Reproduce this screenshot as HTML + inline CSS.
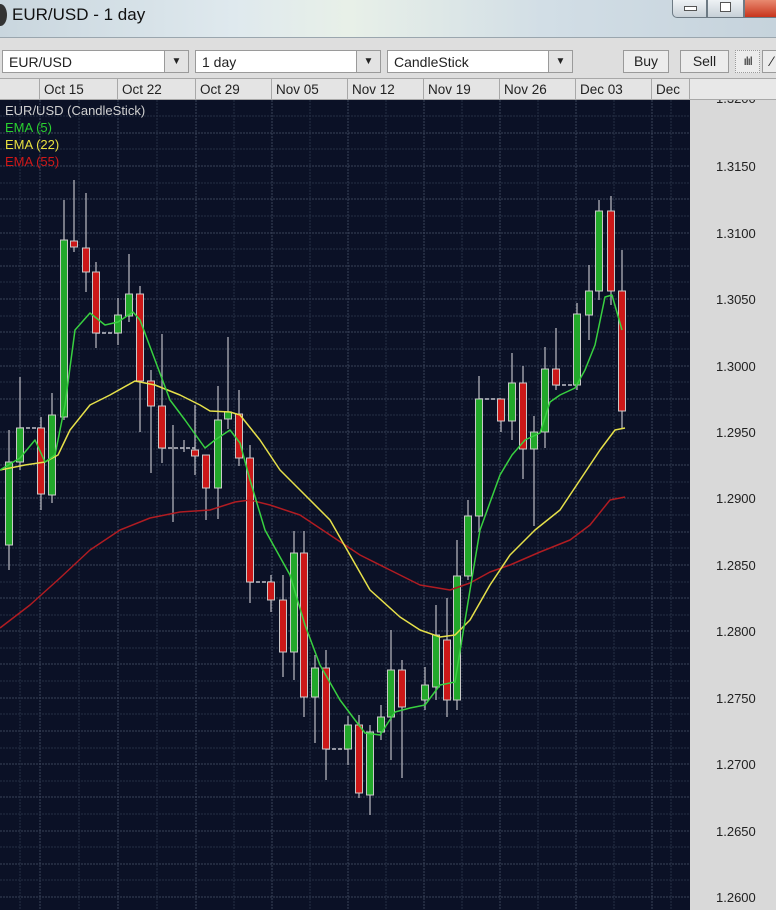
<!DOCTYPE html>
<html><head><meta charset="utf-8"><style>
*{margin:0;padding:0;box-sizing:border-box}
body{width:776px;height:910px;overflow:hidden;background:#d9d9d9;font-family:"Liberation Sans",sans-serif;position:relative}
.title{position:absolute;left:0;top:0;width:776px;height:38px;background:linear-gradient(90deg,#c9d6de 0%,#dfe9ee 30%,#e8f0e8 45%,#d2dee6 70%,#c6d3dc 100%);border-bottom:1px solid #9aa6ae}
.title span{position:absolute;left:12px;top:5px;font-size:17px;color:#111}
.ico{position:absolute;left:-6px;top:4px;width:13px;height:22px;border-radius:50%;background:#333}
.wb{position:absolute;top:0;height:18px;border:1px solid #6d7a84;border-top:none;background:linear-gradient(#eef2f5,#c7d0d7)}
.tb{position:absolute;left:0;top:38px;width:776px;height:40px;background:#dedede}
.combo{position:absolute;top:12px;height:23px;background:#fff;border:1px solid #9a9a9a;font-size:14px;padding:3px 0 0 6px;color:#222}
.combo b{position:absolute;right:0;top:0;width:24px;height:21px;background:#e3e3e3;border-left:1px solid #9a9a9a;font-size:10px;text-align:center;line-height:21px;font-weight:normal}
.btn{position:absolute;top:12px;height:23px;background:#ececec;border:1px solid #9a9a9a;font-size:14px;text-align:center;line-height:21px;color:#222}
.hdr{position:absolute;top:78px;height:22px;background:#e4e4e4;border:1px solid #a8a8a8;border-left:none;font-size:13.5px;padding:3px 0 0 4px;color:#222}
.axis{position:absolute;left:690px;top:100px;width:86px;height:810px;background:#d9d9d9;overflow:hidden}
.axis div{position:absolute;left:26px;font-size:13px;color:#222}
</style></head><body>
<div class="title"><div class="ico"></div><span>EUR/USD - 1 day</span>
<div class="wb" style="left:672px;width:35px;border-radius:0 0 0 5px"><div style="position:absolute;left:11px;top:6px;width:13px;height:5px;border:1px solid #555;background:#fff"></div></div>
<div class="wb" style="left:707px;width:37px"><div style="position:absolute;left:12px;top:2px;width:11px;height:10px;border:1px solid #555;background:#fff"></div></div>
<div class="wb" style="left:744px;width:40px;background:linear-gradient(#e88a70,#c8341c)"></div>
</div>
<div class="tb">
<div class="combo" style="left:2px;width:187px">EUR/USD<b>▼</b></div>
<div class="combo" style="left:195px;width:186px">1 day<b>▼</b></div>
<div class="combo" style="left:387px;width:186px">CandleStick<b>▼</b></div>
<div class="btn" style="left:623px;width:46px">Buy</div>
<div class="btn" style="left:680px;width:49px">Sell</div>
<div class="btn" style="left:735px;width:25px;border-style:dotted;font-size:12px;letter-spacing:-1px">ılıl</div>
<div class="btn" style="left:762px;width:20px">⁄</div>
</div>
<div class="hdr" style="left:0;width:40px;padding:0"></div>
<div class="hdr" style="left:40px;width:78px">Oct 15</div>
<div class="hdr" style="left:118px;width:78px">Oct 22</div>
<div class="hdr" style="left:196px;width:76px">Oct 29</div>
<div class="hdr" style="left:272px;width:76px">Nov 05</div>
<div class="hdr" style="left:348px;width:76px">Nov 12</div>
<div class="hdr" style="left:424px;width:76px">Nov 19</div>
<div class="hdr" style="left:500px;width:76px">Nov 26</div>
<div class="hdr" style="left:576px;width:76px">Dec 03</div>
<div class="hdr" style="left:652px;width:38px">Dec</div>
<div class="hdr" style="left:690px;width:86px;border-right:none;background:#e8e8e8"></div>
<div class="axis">
<div style="top:-9px">1.3200</div><div style="top:59px">1.3150</div><div style="top:126px">1.3100</div><div style="top:192px">1.3050</div><div style="top:259px">1.3000</div><div style="top:325px">1.2950</div><div style="top:391px">1.2900</div><div style="top:458px">1.2850</div><div style="top:524px">1.2800</div><div style="top:591px">1.2750</div><div style="top:657px">1.2700</div><div style="top:724px">1.2650</div><div style="top:790px">1.2600</div>
</div>
<svg style="position:absolute;left:0;top:100px" width="690" height="810" viewBox="0 100 690 810">
<rect x="0" y="100" width="690" height="810" fill="#0b1126"/>
<g stroke="#3a4258" stroke-width="1" stroke-dasharray="2,1">
<path d="M40 100V910M118 100V910M196 100V910M272 100V910M348 100V910M424 100V910M500 100V910M576 100V910M652 100V910"/>
<path d="M0 133H690M0 166H690M0 199H690M0 233H690M0 266H690M0 299H690M0 332H690M0 366H690M0 399H690M0 432H690M0 465H690M0 498H690M0 532H690M0 565H690M0 598H690M0 631H690M0 664H690M0 698H690M0 731H690M0 764H690M0 797H690M0 831H690M0 864H690M0 897H690"/>
</g>
<g stroke="#262e44" stroke-width="1" stroke-dasharray="2,1">
<path d="M20 100V910M79 100V910M157 100V910M234 100V910M310 100V910M386 100V910M462 100V910M538 100V910M614 100V910M671 100V910"/>
<path d="M0 116H690M0 149H690M0 183H690M0 216H690M0 249H690M0 282H690M0 316H690M0 349H690M0 382H690M0 415H690M0 449H690M0 482H690M0 515H690M0 548H690M0 582H690M0 615H690M0 648H690M0 681H690M0 714H690M0 748H690M0 781H690M0 814H690M0 847H690M0 880H690"/>
</g>
<g stroke="#b0b0b8" stroke-width="1.3">
<path d="M9 430V570M20 377V470M41 417V510M52 393V503M64 200V420M74 180V252M86 193V292M96 262V348M118 298V345M129 254V322M140 286V432M151 370V473M162 334V463M173 425V522M184 440V452M195 405V475M206 455V520M218 386V519M228 337V429M239 390V466M250 445V603M271 575V612M283 575V677M294 531V680M304 531V717M315 655V743M326 650V780M348 716V765M359 715V798M370 725V815M381 705V740M391 630V760M402 660V778M425 667V710M436 605V700M447 598V717M457 540V710M468 500V580M479 376V532M501 399V432M512 353V440M523 366V479M534 416V526M545 347V448M556 328V390M577 303V390M589 265V340M599 200V300M611 196V305M622 250V428"/>
</g>
<g stroke="#c0c0c8" stroke-width="1.5" stroke-dasharray="4,2">
<path d="M20 428H41M96 333H118M162 448H195M250 582H271M326 749H348M479 399H501M556 385H577"/>
</g>
<g stroke="#c8c8c8" stroke-width="1">
<g fill="#22a82a">
<rect x="5.5" y="462" width="7" height="83"/><rect x="16.5" y="428" width="7" height="34"/><rect x="48.5" y="415" width="7" height="80"/><rect x="60.5" y="240" width="7" height="177"/><rect x="114.5" y="315" width="7" height="18"/><rect x="125.5" y="294" width="7" height="22"/><rect x="214.5" y="420" width="7" height="68"/><rect x="224.5" y="412" width="7" height="7"/><rect x="290.5" y="553" width="7" height="99"/><rect x="311.5" y="668" width="7" height="29"/><rect x="344.5" y="725" width="7" height="24"/><rect x="366.5" y="732" width="7" height="63"/><rect x="377.5" y="717" width="7" height="15"/><rect x="387.5" y="670" width="7" height="47"/><rect x="421.5" y="685" width="7" height="15"/><rect x="432.5" y="635" width="7" height="52"/><rect x="453.5" y="576" width="7" height="124"/><rect x="464.5" y="516" width="7" height="60"/><rect x="475.5" y="399" width="7" height="117"/><rect x="508.5" y="383" width="7" height="38"/><rect x="530.5" y="432" width="7" height="17"/><rect x="541.5" y="369" width="7" height="63"/><rect x="573.5" y="314" width="7" height="71"/><rect x="585.5" y="291" width="7" height="24"/><rect x="595.5" y="211" width="7" height="80"/>
</g>
<g fill="#cc1818">
<rect x="37.5" y="428" width="7" height="66"/><rect x="70.5" y="241" width="7" height="6"/><rect x="82.5" y="248" width="7" height="24"/><rect x="92.5" y="272" width="7" height="61"/><rect x="136.5" y="294" width="7" height="87"/><rect x="147.5" y="381" width="7" height="25"/><rect x="158.5" y="406" width="7" height="42"/><rect x="191.5" y="450" width="7" height="6"/><rect x="202.5" y="455" width="7" height="33"/><rect x="235.5" y="414" width="7" height="44"/><rect x="246.5" y="458" width="7" height="124"/><rect x="267.5" y="582" width="7" height="18"/><rect x="279.5" y="600" width="7" height="52"/><rect x="300.5" y="553" width="7" height="144"/><rect x="322.5" y="668" width="7" height="81"/><rect x="355.5" y="725" width="7" height="68"/><rect x="398.5" y="670" width="7" height="37"/><rect x="443.5" y="640" width="7" height="60"/><rect x="497.5" y="399" width="7" height="22"/><rect x="519.5" y="383" width="7" height="66"/><rect x="552.5" y="369" width="7" height="16"/><rect x="607.5" y="211" width="7" height="80"/><rect x="618.5" y="291" width="7" height="120"/>
</g>
</g>
<g fill="none" stroke-width="1.5" stroke-linejoin="round">
<polyline stroke="#b01c22" points="0,628 30,605 60,578 90,550 120,530 150,518 180,512 210,510 235,502 250,500 270,505 300,515 330,535 360,555 390,570 420,585 450,590 470,583 490,572 510,565 540,552 570,540 590,525 610,500 625,497"/>
<polyline stroke="#e6e04a" points="0,470 25,465 45,462 58,455 70,430 90,405 110,395 135,381 155,385 180,395 200,405 210,411 230,412 240,415 260,440 280,470 300,490 330,520 350,555 370,590 400,617 420,630 440,637 455,635 470,620 490,585 510,555 535,530 560,510 580,480 600,450 615,430 625,428"/>
<polyline stroke="#38d040" points="0,470 20,458 35,440 45,462 55,455 65,405 75,330 90,313 105,325 118,322 133,312 140,320 155,360 170,400 185,420 205,448 215,440 230,430 240,443 250,480 265,530 290,575 305,625 320,665 340,700 355,720 365,733 380,735 395,712 410,708 425,705 440,685 455,682 470,590 480,530 500,475 512,455 525,440 540,433 550,402 560,395 575,388 585,370 595,345 605,297 612,295 622,330"/>
</g>
<g font-family="Liberation Sans, sans-serif" font-size="13">
<text x="5" y="115" fill="#d0d0d0">EUR/USD (CandleStick)</text>
<text x="5" y="132" fill="#2ad030">EMA (5)</text>
<text x="5" y="149" fill="#e8e040">EMA (22)</text>
<text x="5" y="166" fill="#d01818">EMA (55)</text>
</g>
</svg>
</body></html>
